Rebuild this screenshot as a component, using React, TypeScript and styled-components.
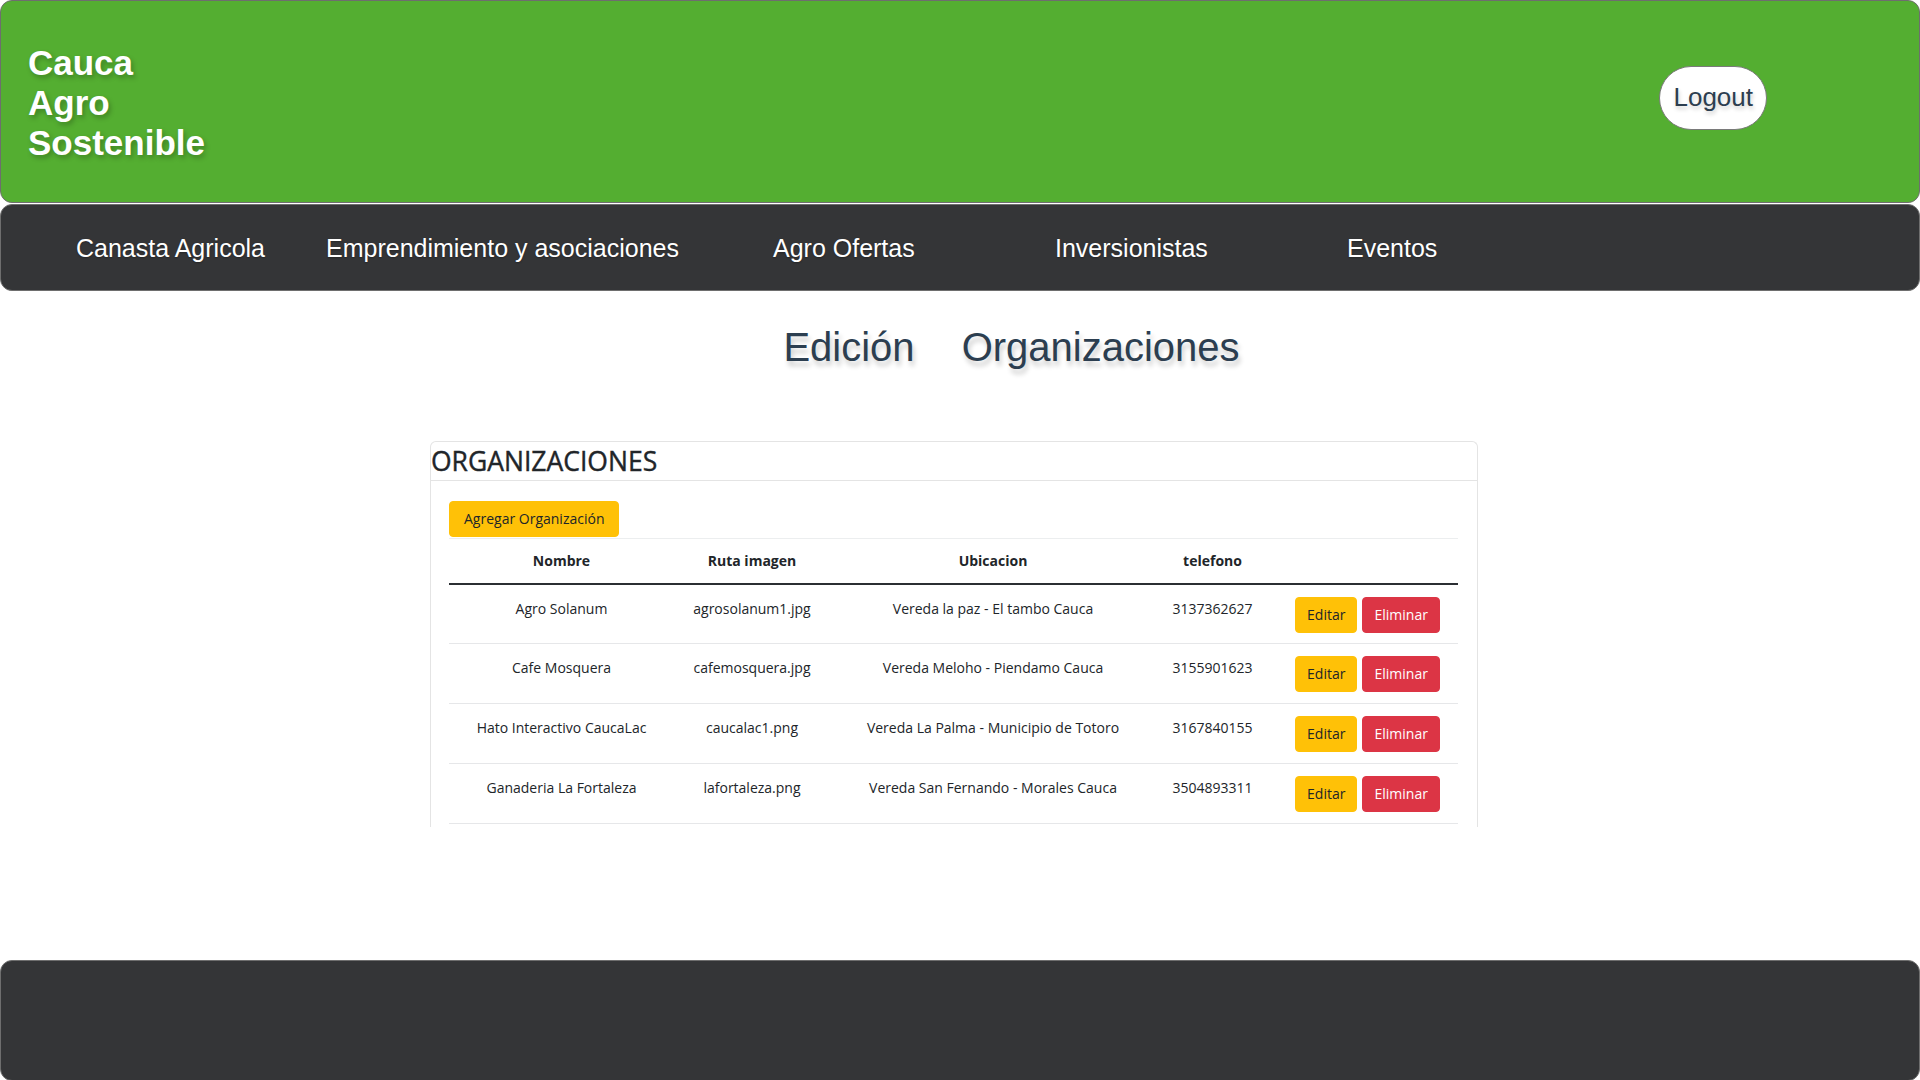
import React from "react";
import styled, { createGlobalStyle } from "styled-components";

const GlobalStyle = createGlobalStyle`
  html, body { margin: 0; padding: 0; background: #ffffff; }
  body { font-family: "Liberation Sans", Arial, sans-serif; }
  * { box-sizing: border-box; }
`;

const Page = styled.div`
  width: 1920px;
  min-height: 1080px;
  display: flex;
  flex-direction: column;
`;

const Header = styled.header`
  height: 203px;
  background: #54ae31;
  border: 1px solid #6e6e6e;
  border-radius: 12px;
  display: flex;
  align-items: center;
  justify-content: space-between;
  padding: 0 152px 0 27px;
`;

const Brand = styled.h1`
  margin: 3px 0 0;
  width: 185px;
  font-family: "Liberation Sans", Arial, sans-serif;
  font-weight: 700;
  font-size: 35px;
  line-height: 40px;
  color: #ffffff;
  text-shadow: 2px 3px 5px rgba(0, 0, 0, 0.25);
`;

const LogoutButton = styled.button`
  height: 64px;
  margin-bottom: 8px;
  padding: 0 13px;
  background: #ffffff;
  border: 1px solid #7a7a7a;
  border-radius: 32px;
  font-family: "Liberation Sans", Arial, sans-serif;
  font-size: 26px;
  color: #2c3e50;
  text-shadow: 1px 3px 4px rgba(0, 0, 0, 0.2);
  cursor: pointer;
`;

const Nav = styled.nav`
  margin-top: 1px;
  height: 87px;
  background: #343537;
  border: 1px solid #6e6e6e;
  border-radius: 12px;
  display: grid;
  grid-template-columns: 250px 447px 282px 292px auto;
  align-items: center;
  padding: 2px 0 0 75px;
`;

const NavLink = styled.a`
  font-family: "Liberation Sans", Arial, sans-serif;
  font-size: 25px;
  color: #ffffff;
  text-decoration: none;
  white-space: nowrap;
  text-shadow: 0 1px 2px rgba(0, 0, 0, 0.3);
`;

const Title = styled.h2`
  margin: 33px 0 0;
  padding-left: 103px;
  display: flex;
  justify-content: center;
  gap: 47px;
  font-family: "Liberation Sans", Arial, sans-serif;
  font-weight: 400;
  font-size: 40px;
  line-height: 46px;
  color: #2c3e50;
  text-shadow: 2px 5px 5px rgba(0, 0, 0, 0.2);
`;

const Card = styled.section`
  margin: 71px 0 0 430px;
  width: 1048px;
  border: 1px solid #e4e4e4;
  border-bottom: none;
  border-radius: 6px 6px 0 0;
  font-family: "Open Sans", "Noto Sans", sans-serif;
  color: #212529;
`;

const CardHeader = styled.div`
  height: 39px;
  border-bottom: 1px solid #e4e4e4;
  display: flex;
  align-items: center;
`;

const CardTitle = styled.h3`
  margin: 0;
  font-family: "Open Sans", "Noto Sans", sans-serif;
  font-weight: 500;
  font-size: 26.5px;
  line-height: 1;
  color: #212529;
  -webkit-text-stroke: 0.4px #212529;
`;

const CardBody = styled.div`
  padding: 20px 18px 3px;
`;

const Btn = styled.button<{ $variant: "warning" | "danger" }>`
  height: 36px;
  padding: 0 11px;
  border-radius: 4px;
  border: 1px solid ${(p) => (p.$variant === "warning" ? "#ffc107" : "#dc3545")};
  background: ${(p) => (p.$variant === "warning" ? "#ffc107" : "#dc3545")};
  color: ${(p) => (p.$variant === "warning" ? "#212529" : "#ffffff")};
  font-family: "Open Sans", "Noto Sans", sans-serif;
  font-size: 14px;
  line-height: 1;
  cursor: pointer;
`;

const AddButton = styled(Btn)`
  padding: 0 14px;
  margin-bottom: 1px;
`;

const Table = styled.table`
  width: 1009px;
  border-collapse: collapse;
  table-layout: fixed;
  font-size: 14px;
  color: #212529;
`;

const HeadCell = styled.th`
  height: 45px;
  padding: 0 8px;
  border-top: 1px solid #eceeef;
  border-bottom: 2px solid #2b2f33;
  font-weight: 700;
  text-align: center;
  vertical-align: middle;
`;

const Row = styled.tr`
  height: 60px;
  border-bottom: 1px solid #e6e7e9;
`;

const Cell = styled.td`
  padding: 13px 8px 0;
  text-align: center;
  vertical-align: top;
  line-height: 21px;
  white-space: nowrap;
`;

const ActionCell = styled.td`
  padding: 12px 8px 0 16px;
  vertical-align: top;
`;

const Actions = styled.div`
  display: flex;
  justify-content: center;
  gap: 5px;
`;

const Footer = styled.footer`
  margin-top: 133px;
  height: 121px;
  background: #343537;
  border: 1px solid #6e6e6e;
  border-radius: 12px;
`;

const navItems = [
  "Canasta Agricola",
  "Emprendimiento y asociaciones",
  "Agro Ofertas",
  "Inversionistas",
  "Eventos",
];

const rows = [
  ["Agro Solanum", "agrosolanum1.jpg", "Vereda la paz - El tambo Cauca", "3137362627"],
  ["Cafe Mosquera", "cafemosquera.jpg", "Vereda Meloho - Piendamo Cauca", "3155901623"],
  ["Hato Interactivo CaucaLac", "caucalac1.png", "Vereda La Palma - Municipio de Totoro", "3167840155"],
  ["Ganaderia La Fortaleza", "lafortaleza.png", "Vereda San Fernando - Morales Cauca", "3504893311"],
];

export default function App() {
  return (
    <Page>
      <GlobalStyle />
      <Header>
        <Brand>Cauca Agro Sostenible</Brand>
        <LogoutButton>Logout</LogoutButton>
      </Header>
      <Nav>
        {navItems.map((item) => (
          <NavLink key={item} href="#">
            {item}
          </NavLink>
        ))}
      </Nav>
      <Title>
        <span>Edición</span>
        <span>Organizaciones</span>
      </Title>
      <Card>
        <CardHeader>
          <CardTitle>ORGANIZACIONES</CardTitle>
        </CardHeader>
        <CardBody>
          <AddButton $variant="warning">Agregar Organización</AddButton>
          <Table>
            <colgroup>
              <col style={{ width: 225 }} />
              <col style={{ width: 156 }} />
              <col style={{ width: 326 }} />
              <col style={{ width: 113 }} />
              <col style={{ width: 189 }} />
            </colgroup>
            <thead>
              <tr>
                <HeadCell>Nombre</HeadCell>
                <HeadCell>Ruta imagen</HeadCell>
                <HeadCell>Ubicacion</HeadCell>
                <HeadCell>telefono</HeadCell>
                <HeadCell />
              </tr>
            </thead>
            <tbody>
              {rows.map((r) => (
                <Row key={r[0]}>
                  {r.map((c) => (
                    <Cell key={c}>{c}</Cell>
                  ))}
                  <ActionCell>
                    <Actions>
                      <Btn $variant="warning">Editar</Btn>
                      <Btn $variant="danger">Eliminar</Btn>
                    </Actions>
                  </ActionCell>
                </Row>
              ))}
            </tbody>
          </Table>
        </CardBody>
      </Card>
      <Footer />
    </Page>
  );
}
